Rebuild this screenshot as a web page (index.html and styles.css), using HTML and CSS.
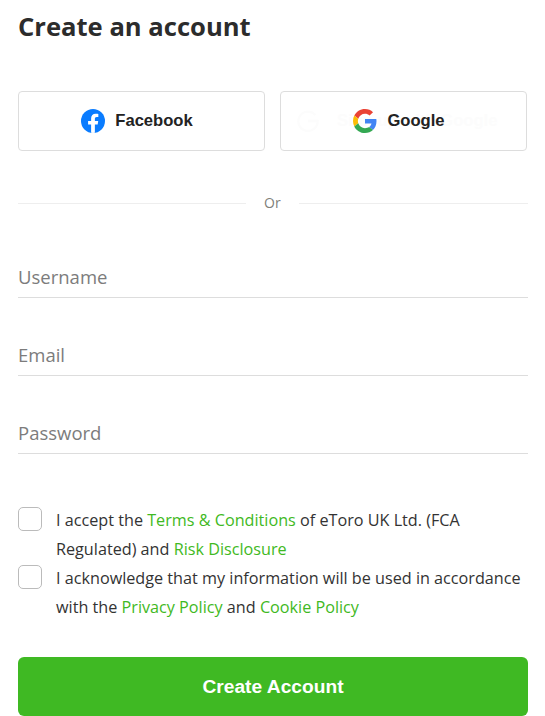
FILE: index.html
```html
<!DOCTYPE html>
<html lang="en">
<head>
    <meta charset="UTF-8">
    <meta name="viewport" content="width=device-width, initial-scale=1.0">
    <title>Create an account</title>
    <link rel="stylesheet" href="styles.css">
</head>
<body>
    <div class="signup">
        <h1>Create an account</h1>

        <!-- Social login buttons -->
        <div class="social">
            <button class="social-btn">
                <svg class="social-icon" viewBox="0 0 24 24">
                    <circle cx="12" cy="12" r="12" fill="#0a7cff"/>
                    <path fill="#fff" d="M16.67 15.47 17.2 12h-3.33V9.75c0-.95.47-1.87 1.95-1.87h1.51V4.93s-1.37-.23-2.68-.23c-2.74 0-4.53 1.66-4.53 4.67V12H7.08v3.47h3.04v8.38a12 12 0 0 0 3.75 0v-8.38z"/>
                </svg>
                <span>Facebook</span>
            </button>
            <button class="social-btn">
                <!-- faint original button showing through -->
                <svg class="ghost-icon" viewBox="0 0 24 24">
                    <path fill="none" stroke="#fcfcfc" stroke-width="2.5" d="M20 5.5A10.5 10.5 0 1 0 22.5 12H12"/>
                </svg>
                <span class="ghost">Sign up with Google</span>
                <svg class="social-icon" viewBox="0 0 48 48">
                    <path fill="#ea4335" d="M24 9.5c3.54 0 6.71 1.22 9.21 3.6l6.85-6.85C35.9 2.38 30.47 0 24 0 14.62 0 6.51 5.38 2.56 13.22l7.98 6.19C12.43 13.72 17.74 9.5 24 9.5z"/>
                    <path fill="#4285f4" d="M46.98 24.55c0-1.57-.15-3.09-.38-4.55H24v9.02h12.94c-.58 2.96-2.26 5.48-4.78 7.18l7.73 6c4.51-4.18 7.09-10.36 7.09-17.65z"/>
                    <path fill="#fbbc05" d="M10.53 28.59c-.48-1.45-.76-2.99-.76-4.59s.27-3.14.76-4.59l-7.98-6.19C.92 16.46 0 20.12 0 24c0 3.88.92 7.54 2.56 10.78l7.97-6.19z"/>
                    <path fill="#34a853" d="M24 48c6.48 0 11.93-2.13 15.89-5.81l-7.73-6c-2.15 1.45-4.92 2.3-8.16 2.3-6.26 0-11.57-4.22-13.47-9.91l-7.98 6.19C6.51 42.62 14.62 48 24 48z"/>
                </svg>
                <span>Google</span>
            </button>
        </div>

        <div class="divider"><span>Or</span></div>

        <!-- Form fields -->
        <input class="field" type="text" placeholder="Username">
        <input class="field" type="text" placeholder="Email">
        <input class="field" type="password" placeholder="Password">

        <div class="terms">
            <div class="check-row">
                <span class="check"></span>
                <p>I accept the <a href="#">Terms &amp; Conditions</a> of eToro UK Ltd. (FCA Regulated) and <a href="#">Risk Disclosure</a></p>
            </div>
            <div class="check-row">
                <span class="check"></span>
                <p>I acknowledge that my information will be used in accordance with the <a href="#">Privacy Policy</a> and <a href="#">Cookie Policy</a></p>
            </div>
        </div>

        <button class="submit">Create Account</button>
    </div>
</body>
</html>
```

FILE: styles.css
```css
body {
    margin: 0;
    background-color: #fff;
    color: #2a2a2a;
    font-family: 'Open Sans', sans-serif;
    overflow: hidden;
}

.signup {
    width: 510px;
    margin-left: 18px;
}

h1 {
    margin: 0;
    padding-top: 10px;
    height: 80px;
    box-sizing: border-box;
    font-size: 25.6px;
    line-height: 34px;
    font-weight: 700;
    color: #2c2c2c;
}

/* Social buttons */
.social {
    display: flex;
    gap: 15px;
    margin-top: 11px;
    width: 509px;
}

.social-btn {
    position: relative;
    flex: 1;
    height: 60px;
    display: flex;
    justify-content: center;
    align-items: center;
    gap: 10px;
    background-color: #fff;
    border: 1px solid #ddd;
    border-radius: 4px;
    color: #222;
    font-family: 'Liberation Sans', sans-serif;
    font-size: 16.6px;
    font-weight: bold;
    padding: 0 9px 0 0;
}

.social-icon {
    position: relative;
    width: 24px;
    height: 24px;
}

.social-btn span {
    position: relative;
}

/* barely visible label left behind the google button */
.social-btn .ghost {
    position: absolute;
    left: 56px;
    color: #fcfcfc;
    white-space: nowrap;
}

.ghost-icon {
    position: absolute;
    left: 16px;
    top: 18px;
    width: 22px;
    height: 22px;
}

/* Or divider */
.divider {
    display: flex;
    align-items: center;
    margin-top: 42px;
    height: 20px;
    color: #80807a;
    font-size: 14px;
}

.divider span {
    position: relative;
    top: -1px;
}

.divider::before,
.divider::after {
    content: "";
    height: 1px;
    background-color: #eee;
}

.divider::before {
    width: 228px;
    margin-right: 18px;
}

.divider::after {
    flex: 1;
    margin-left: 18px;
}

/* Inputs */
.field {
    display: block;
    width: 100%;
    height: 41px;
    box-sizing: border-box;
    margin-top: 37px;
    padding: 0 0 2px;
    border: none;
    border-bottom: 1px solid #ddd;
    outline: none;
    font-family: 'Open Sans', sans-serif;
    font-size: 18.5px;
}

.divider + .field {
    margin-top: 44px;
}

.field::placeholder {
    color: #7c7c7c;
    opacity: 1;
}

/* Checkboxes */
.terms {
    margin-top: 52px;
}

.check-row {
    display: flex;
    gap: 14px;
}

.check {
    flex: none;
    width: 24px;
    height: 24px;
    box-sizing: border-box;
    margin-top: 1px;
    border: 1px solid #bbb;
    border-radius: 5px;
}

.check-row p {
    margin: 0;
    font-size: 16.2px;
    line-height: 29px;
    color: #333;
}

.check-row a {
    color: #3fb923;
    text-decoration: none;
}

.submit {
    display: block;
    width: 100%;
    height: 59px;
    margin-top: 35px;
    background-color: #3fb923;
    border: none;
    border-radius: 6px;
    color: #fff;
    font-family: 'Liberation Sans', sans-serif;
    font-size: 19.2px;
    font-weight: bold;
}
```
